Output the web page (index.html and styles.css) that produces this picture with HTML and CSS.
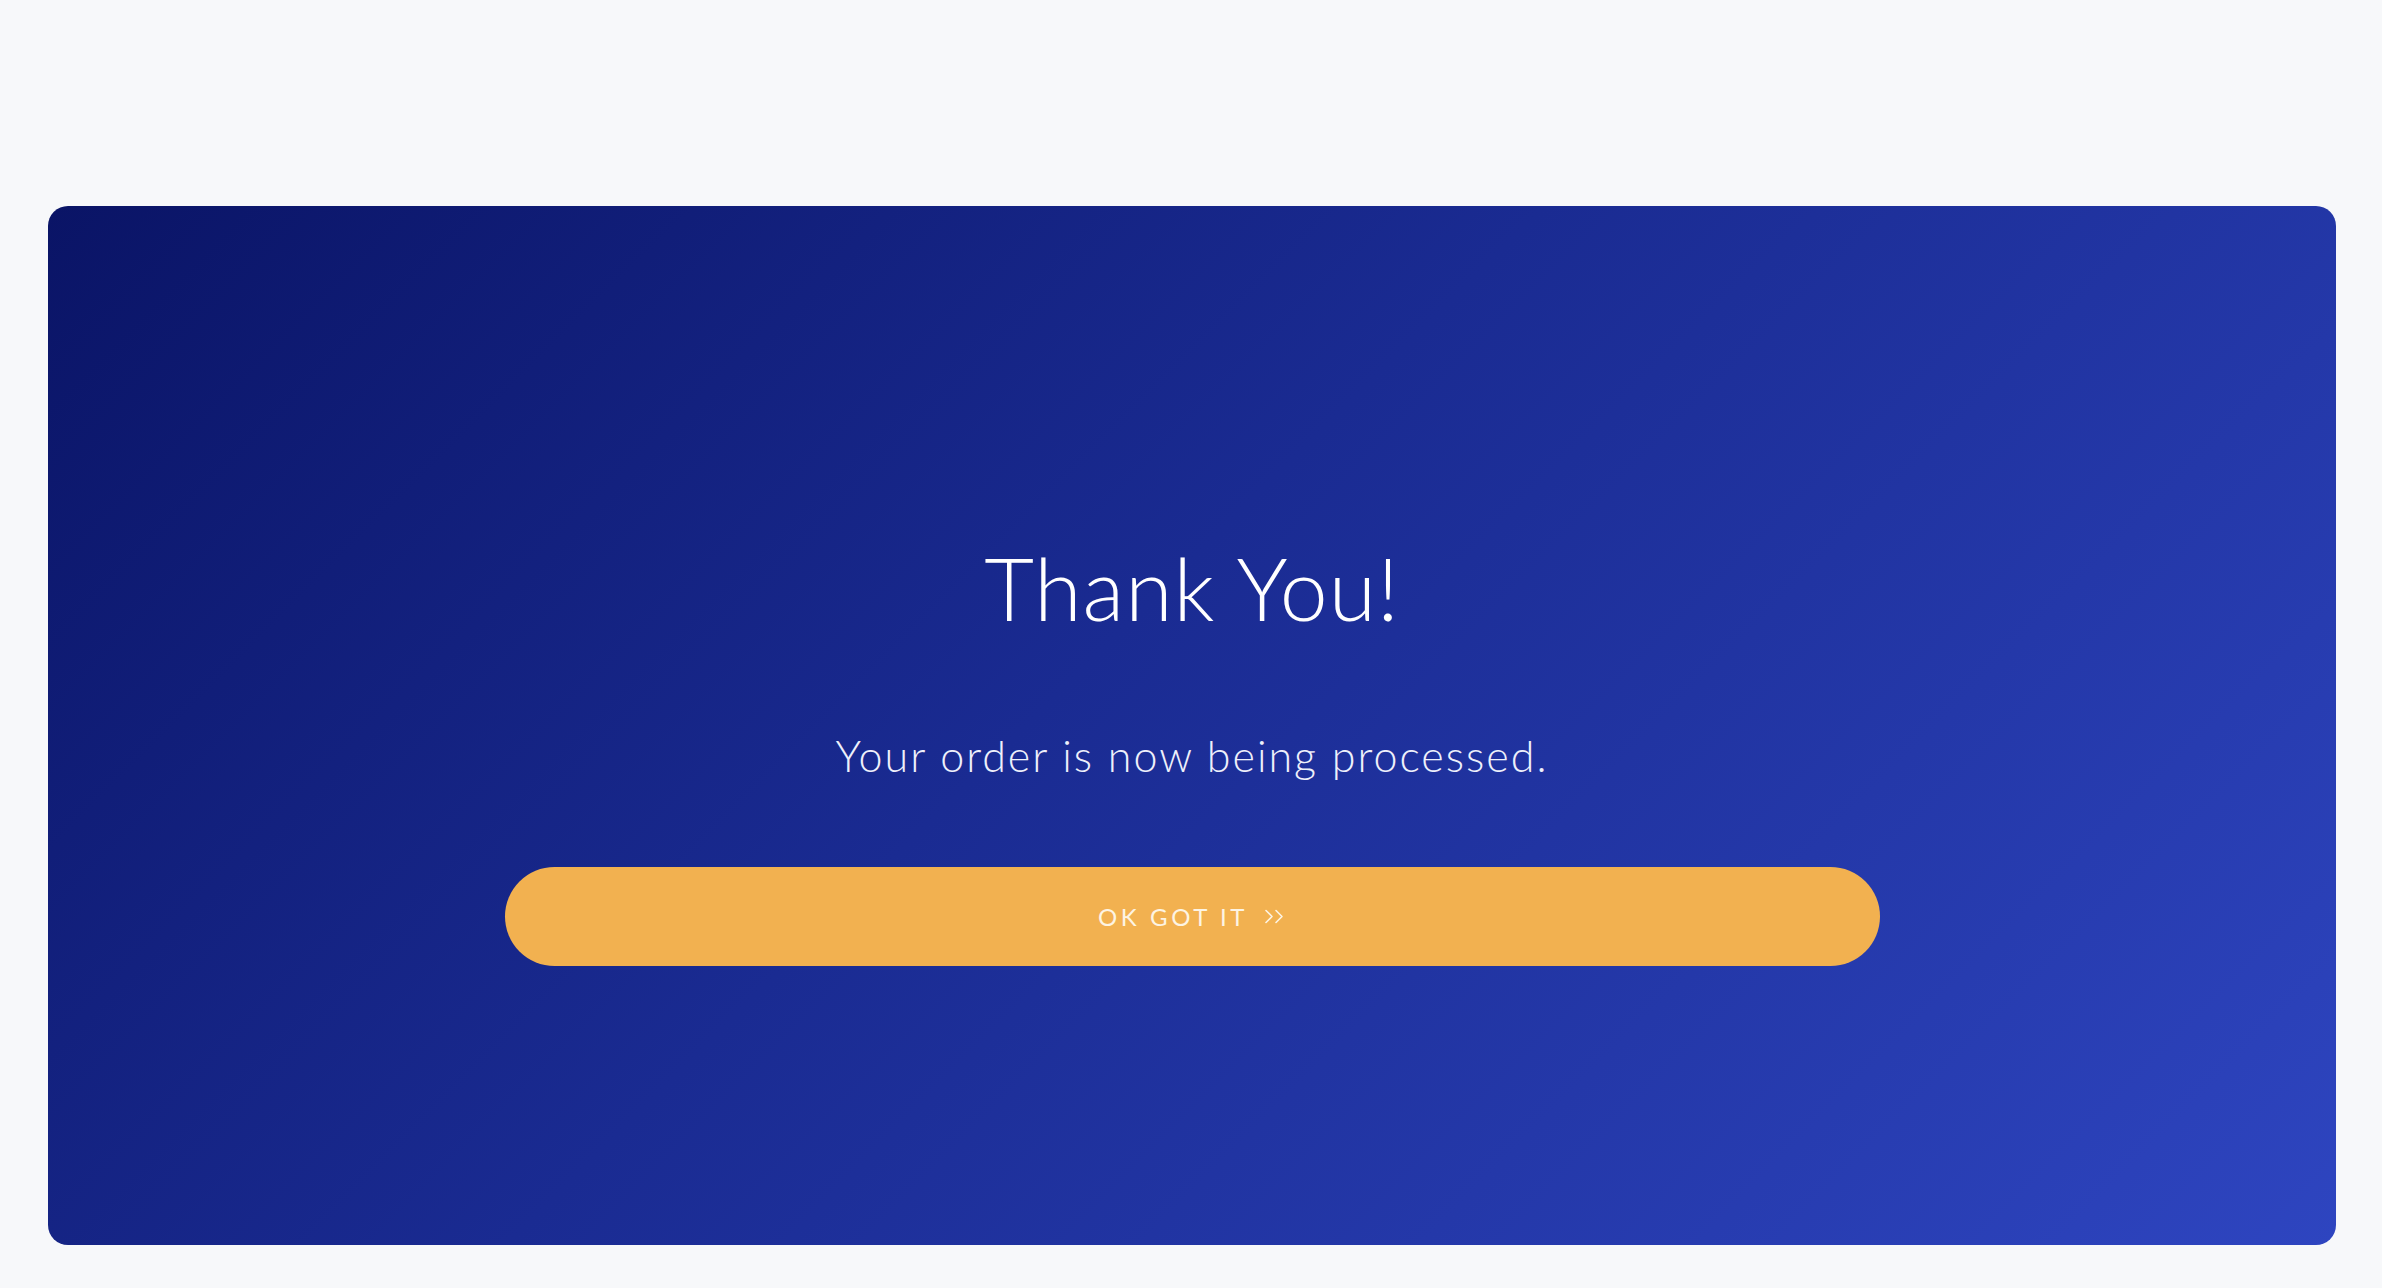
FILE: index.html
```html
<!DOCTYPE html>
<html lang="en">
<head>
    <meta charset="UTF-8">
    <meta name="viewport" content="width=device-width, initial-scale=1.0">
    <title>Thank You</title>
    <link rel="stylesheet" href="styles.css">
</head>
<body>
    <div class="page">
        <div class="thanks-card">
            <h1>Thank You!</h1>
            <p class="lead">Your order is now being processed.</p>
            <button class="ok-btn" type="button">
                <span>OK GOT IT</span>
                <svg class="chev" width="22" height="15" viewBox="0 0 22 15" fill="none" stroke="currentColor" stroke-width="1.6" stroke-linecap="round" stroke-linejoin="round">
                    <path d="M2 1.5 L8 7.5 L2 13.5"/>
                    <path d="M12 1.5 L18 7.5 L12 13.5"/>
                </svg>
            </button>
        </div>
    </div>
</body>
</html>
```

FILE: styles.css
```css
body {
    margin: 0;
    background-color: #f7f8fa;
    font-family: Lato, "Open Sans", sans-serif;
}
.page {
    padding: 206px 46px 43px 48px;
}
.thanks-card {
    height: 1039px;
    box-sizing: border-box;
    padding-top: 330px;
    border-radius: 20px;
    background: linear-gradient(135deg, #0a1466 0%, #1a2b92 45%, #2e45c0 100%);
    display: flex;
    flex-direction: column;
    align-items: center;
    color: #fff;
}
.thanks-card h1 {
    margin: 0;
    font-size: 86px;
    font-weight: 300;
    line-height: 1.2;
    letter-spacing: 1px;
}
.lead {
    margin: 91px 0 0;
    font-size: 43px;
    font-weight: 300;
    line-height: 1.2;
    color: #eef0fb;
    letter-spacing: 2px;
}
.ok-btn {
    margin-top: 85px;
    width: 1375px;
    height: 99px;
    border: none;
    border-radius: 50px;
    background-color: #f2b150;
    color: #fdf4e3;
    font-family: inherit;
    font-size: 24px;
    font-weight: 400;
    letter-spacing: 3.6px;
    display: flex;
    align-items: center;
    justify-content: center;
    gap: 16px;
    cursor: pointer;
}
.chev {
    display: block;
}
```
